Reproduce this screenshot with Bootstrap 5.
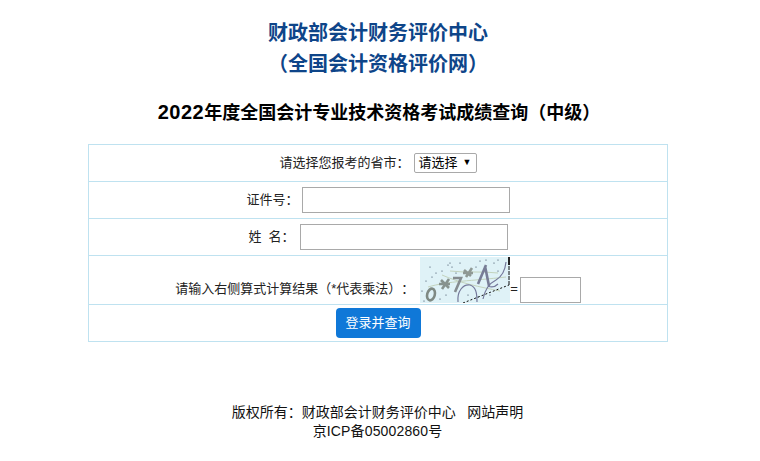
<!DOCTYPE html>
<html lang="zh-CN">
<head>
<meta charset="utf-8">
<title>成绩查询</title>
<link href="https://cdn.jsdelivr.net/npm/bootstrap@5.3.0/dist/css/bootstrap.min.css" rel="stylesheet">
<style>
html,body{height:461px;overflow:hidden}
body{font-family:"Liberation Sans","Noto Sans CJK SC",sans-serif;font-size:13px;color:#222;background:#fff;line-height:1.3;text-spacing-trim:space-all}
.page-wrap{width:760px;padding-top:18px}
.org-title{margin:0 4px 0 0;text-align:center;font-size:20px;font-weight:700;line-height:31px;color:#0e4589}
.exam-title{margin:20px 2px 0 0;text-align:center;font-size:18px;font-weight:700;line-height:26px;color:#000}
.yr-num{font-size:20px;letter-spacing:.5px;line-height:0}
.query-box{width:580px;margin:18px 0 0 88px;border:1px solid #bfe2f0}
.query-row{border-bottom:1px solid #bfe2f0;height:37px}
.query-row:last-child{border-bottom:0;height:36px}
.row-captcha{height:49px;align-items:flex-end;padding-bottom:1px}
.txt-in{height:26px;width:208px;border:1px solid #a9a9a9;background:#fff;padding:0 4px;margin-left:3px;outline:0;border-radius:0}
.txt-name{margin-left:5px}
.txt-short{width:61px;margin-left:2px}
.sel-in{height:20px;width:63px;margin-left:4px;border:1px solid #a9a9a9;border-radius:2px;background:#fff;padding:0 0 0 4px;font-size:13px;color:#000;display:inline-flex;align-items:center;justify-content:space-between}
.sel-arrow{font-size:9px;padding-right:4px}
.captcha{width:90px;height:46px;display:block;margin-left:6px}
.cap-label{padding-bottom:5px}
.btn-query{background:#0f78d8;border:0;border-radius:4px;color:#fff;font-size:13px;height:30px;width:85px;padding:0}
.foot-txt{margin:61px 5px 0 0;text-align:center;font-size:14px;line-height:19px;color:#111}
.foot-txt a{color:#111;text-decoration:none}
.foot-icp{letter-spacing:.15px}
</style>
</head>
<body>
<div class="page-wrap">
  <h1 class="org-title">财政部会计财务评价中心<br>（全国会计资格评价网）</h1>
  <h2 class="exam-title"><span class="yr-num">2022</span>年度全国会计专业技术资格考试成绩查询（中级）</h2>
  <form class="query-box">
    <div class="query-row d-flex justify-content-center align-items-center">
      <label>请选择您报考的省市：</label>
      <span class="sel-in"><span>请选择</span><span class="sel-arrow">▼</span></span>
    </div>
    <div class="query-row d-flex justify-content-center align-items-center">
      <label>证件号：</label><input class="txt-in" type="text">
    </div>
    <div class="query-row d-flex justify-content-center align-items-center">
      <label>姓&nbsp;&nbsp;名：</label><input class="txt-in txt-name" type="text">
    </div>
    <div class="query-row row-captcha d-flex justify-content-center">
      <label class="cap-label">请输入右侧算式计算结果（*代表乘法）：</label>
      <svg class="captcha" viewBox="0 0 90 46" role="img" aria-label="验证码">
        <rect width="90" height="46" fill="#dff2f7"/>
        <g fill="none" stroke="#c3d3bd" stroke-width="1">
          <path d="M8 30C28 24 52 24 86 20M22 18C40 26 60 30 80 34M30 14C46 16 62 14 78 16"/>
        </g>
        <g fill="none" stroke-width="2.6">
          <ellipse cx="11" cy="37.5" rx="3.8" ry="6" stroke="#7f8a84" transform="rotate(15 11 37.5)"/>
          <path d="M21 23l8 8M29 22l-7 10M19 27h11" stroke="#87928e"/>
          <path d="M33 21h8l-6 14" stroke="#858c90"/>
          <path d="M44 13l7 6M52 11l-6 9M43 16h10" stroke="#8f9995"/>
          <path d="M58 27L66 8M65 9L69 29" stroke="#787d96"/>
        </g>
        <g fill="none" stroke="#74789a" stroke-width="1.2">
          <path d="M38 45C37 34 43 27 50 28C56 30 57 36 57 45M63 42C65 32 70 26 76 23C81 20 85 15 86 5M68 29C72 31 76 29 78 27"/>
        </g>
        <path d="M43 46L89 28" fill="none" stroke="#111" stroke-width="1" stroke-dasharray="2 2"/>
        <path d="M89 28V8" stroke="#111" stroke-width="1" stroke-dasharray="4 1"/>
        <path d="M89 0v8" stroke="#222" stroke-width="2"/>
        <g fill="#2f3f55">
          <circle cx="28" cy="8" r=".6"/><circle cx="32" cy="10" r=".6"/><circle cx="30" cy="6" r=".6"/><circle cx="16" cy="16" r=".6"/><circle cx="40" cy="6" r=".6"/><circle cx="60" cy="4" r=".6"/><circle cx="74" cy="6" r=".6"/><circle cx="78" cy="3" r=".6"/><circle cx="6" cy="24" r=".6"/><circle cx="20" cy="42" r=".6"/><circle cx="70" cy="38" r=".6"/><circle cx="48" cy="38" r=".6"/><circle cx="78" cy="14" r=".6"/><circle cx="12" cy="20" r=".6"/><circle cx="26" cy="38" r=".6"/><circle cx="66" cy="3" r=".6"/><circle cx="4" cy="44" r=".6"/><circle cx="10" cy="10" r=".6"/><circle cx="22" cy="14" r=".6"/><circle cx="36" cy="16" r=".6"/><circle cx="56" cy="10" r=".6"/><circle cx="2" cy="34" r=".6"/><circle cx="58" cy="40" r=".6"/>
        </g>
      </svg>
      <span class="cap-label">=</span><input class="txt-in txt-short align-self-end" type="text">
    </div>
    <div class="query-row d-flex justify-content-center align-items-center">
      <button type="button" class="btn btn-query">登录并查询</button>
    </div>
  </form>
  <div class="foot-txt">版权所有：财政部会计财务评价中心&nbsp;&nbsp;&nbsp;<a href="#">网站声明</a><br><span class="foot-icp">京ICP备05002860号</span></div>
</div>
<script src="https://cdn.jsdelivr.net/npm/bootstrap@5.3.0/dist/js/bootstrap.bundle.min.js"></script>
</body>
</html>
